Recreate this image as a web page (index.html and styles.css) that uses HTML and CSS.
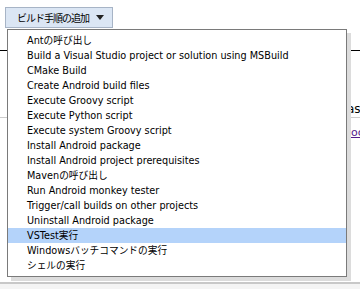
FILE: index.html
```html
<!DOCTYPE html>
<html lang="ja">
<head>
    <meta charset="UTF-8">
    <meta name="viewport" content="width=device-width, initial-scale=1.0">
    <title>ビルド手順の追加</title>
    <link rel="stylesheet" href="styles.css">
</head>
<body>
    <div class="toolbar">
        <button class="menu-button">ビルド手順の追加 <span class="arrow"></span></button>
    </div>

    <!-- page content that sits behind the open menu -->
    <div class="page">
        <div class="rule"></div>
        <div class="field-row">as</div>
        <div class="link-row"><a href="#">oc</a></div>
    </div>
    <div class="footer-line"></div>

    <ul class="dropdown">
        <li>Antの呼び出し</li>
        <li>Build a Visual Studio project or solution using MSBuild</li>
        <li>CMake Build</li>
        <li>Create Android build files</li>
        <li>Execute Groovy script</li>
        <li>Execute Python script</li>
        <li>Execute system Groovy script</li>
        <li>Install Android package</li>
        <li>Install Android project prerequisites</li>
        <li>Mavenの呼び出し</li>
        <li>Run Android monkey tester</li>
        <li>Trigger/call builds on other projects</li>
        <li>Uninstall Android package</li>
        <li class="selected">VSTest実行</li>
        <li>Windowsバッチコマンドの実行</li>
        <li>シェルの実行</li>
    </ul>
</body>
</html>
```

FILE: styles.css
```css
body {
    margin: 0;
    width: 360px;
    height: 289px;
    overflow: hidden;
    position: relative;
    background-color: #fff;
    font-family: "DejaVu Sans", Verdana, "Noto Sans CJK JP", sans-serif;
    color: #000;
}
.toolbar {
    padding: 7px 0 0 5px;
    height: 22px;
}
.menu-button {
    height: 21px;
    width: 108px;
    padding: 0 0 0 11px;
    border: 1px solid #a7b4c6;
    background-color: #dbe6f4;
    font-family: "Noto Sans CJK JP", sans-serif;
    font-size: 10px;
    letter-spacing: -1px;
    white-space: nowrap;
    color: #000;
    display: flex;
    align-items: center;
    gap: 7px;
}
.arrow {
    width: 0;
    height: 0;
    border-left: 4px solid transparent;
    border-right: 4px solid transparent;
    border-top: 5px solid #222;
}
.page {
    padding-top: 21px;
}
.rule {
    border-top: 1px solid #000;
    height: 50px;
}
.field-row {
    padding-left: 347px;
    font-size: 12px;
    line-height: 16px;
    white-space: nowrap;
    border-bottom: 1px solid #ccc;
    height: 16px;
}
.link-row {
    padding: 8px 0 0 351px;
    font-size: 11px;
    line-height: 14px;
    white-space: nowrap;
}
.link-row a {
    color: #551a8b;
}
.footer-line {
    position: absolute;
    left: 0;
    right: 0;
    top: 282px;
    bottom: 0;
    border-top: 2px solid #c8c8c8;
    background-color: #f4f4f4;
}
.dropdown {
    position: absolute;
    left: 7px;
    top: 29px;
    width: 338px;
    margin: 0;
    padding: 3px 0;
    list-style: none;
    background-color: #fff;
    border: 1px solid #7a7a7a;
    box-shadow: 4px 4px 0 #dcdcdc;
}
.dropdown li {
    height: 15px;
    line-height: 15px;
    padding-left: 19px;
    font-size: 9.7px;
    white-space: nowrap;
}
.dropdown li.selected {
    background-color: #b4d3fa;
}
```
